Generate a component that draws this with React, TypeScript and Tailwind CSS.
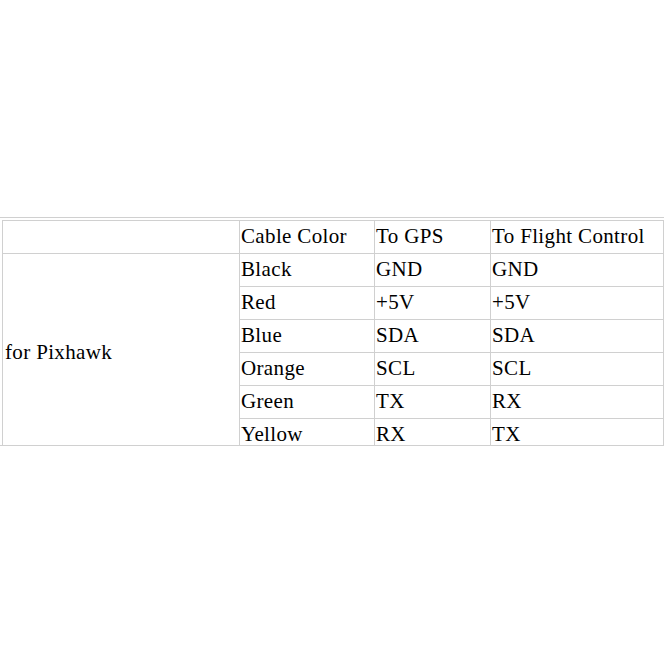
const ROWS = [
  { color: 'Black', gps: 'GND', fc: 'GND' },
  { color: 'Red', gps: '+5V', fc: '+5V' },
  { color: 'Blue', gps: 'SDA', fc: 'SDA' },
  { color: 'Orange', gps: 'SCL', fc: 'SCL' },
  { color: 'Green', gps: 'TX', fc: 'RX' },
  { color: 'Yellow', gps: 'RX', fc: 'TX' },
];

const cell = 'border border-[#d0d0d0] pl-[1px] align-middle whitespace-nowrap';

export default function App() {
  return (
    <div className="w-[664px] h-[664px] bg-white pt-[217px] text-[21px] tracking-[0.35px] text-black font-['Liberation_Serif',serif]">
      <div className="h-[229px] overflow-hidden border-y border-[#d0d0d0]">
        <table className="mt-[2px] ml-[2px] w-[661px] table-fixed border-collapse">
          <colgroup>
            <col className="w-[237px]" />
            <col className="w-[135px]" />
            <col className="w-[116px]" />
            <col className="w-[173px]" />
          </colgroup>
          <tbody>
            <tr className="h-[33px]">
              <td className={cell}></td>
              <td className={cell}>Cable Color</td>
              <td className={cell}>To GPS</td>
              <td className={cell}>To Flight Control</td>
            </tr>
            {ROWS.map((r, i) => (
              <tr key={r.color} className="h-[33px]">
                {i === 0 && (
                  <td rowSpan={6} className={cell + ' pl-[2px]'}>
                    for Pixhawk
                  </td>
                )}
                <td className={cell}>{r.color}</td>
                <td className={cell}>{r.gps}</td>
                <td className={cell}>{r.fc}</td>
              </tr>
            ))}
          </tbody>
        </table>
      </div>
    </div>
  );
}
